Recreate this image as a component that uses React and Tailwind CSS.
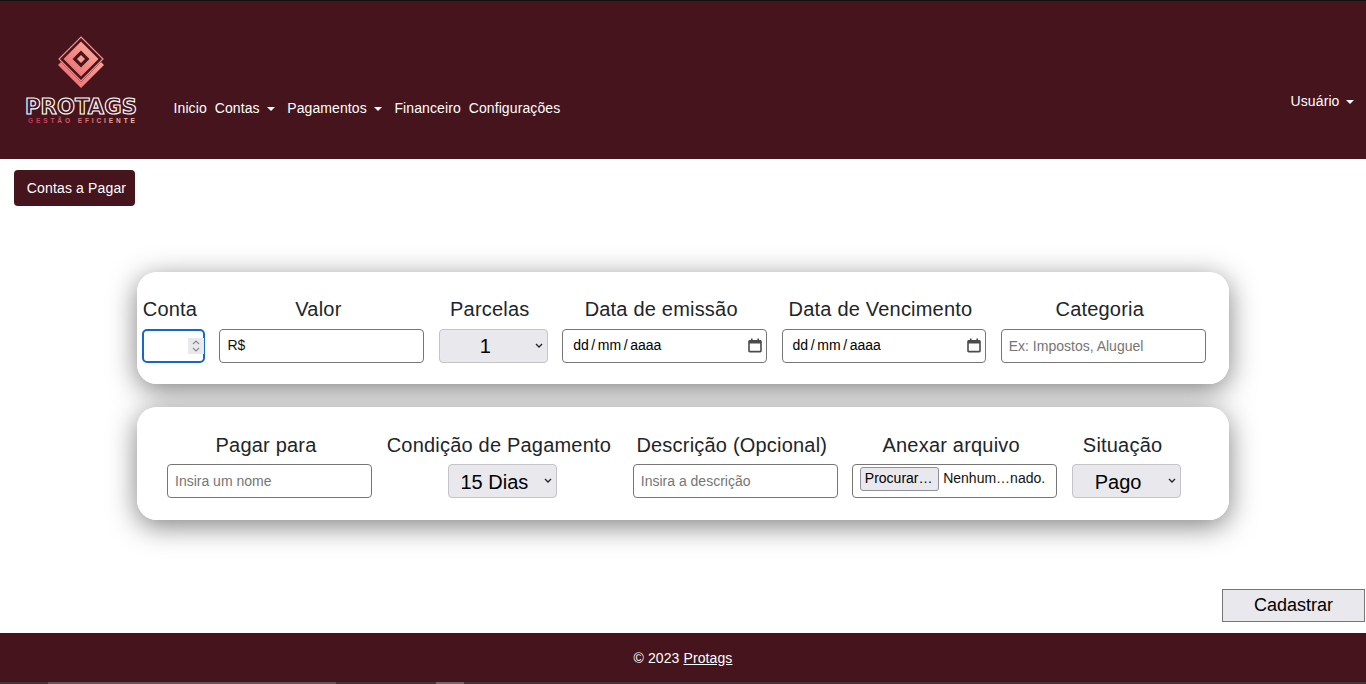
import React from "react";

const Caret = () => (
  <span className="inline-block w-0 h-0 ml-[7.5px] align-[2.4px] border-x-[4.2px] border-x-transparent border-t-[4.2px] border-t-white" />
);

const Logo = () => (
  <svg width="125" height="100" viewBox="20 30 125 100" className="block">
    <defs>
      <linearGradient id="pk" x1="1" y1="0" x2="0" y2="1">
        <stop offset="0" stopColor="#ffb3a0" />
        <stop offset="1" stopColor="#e8656f" />
      </linearGradient>
      <linearGradient id="tg" x1="0" y1="0" x2="1" y2="0">
        <stop offset="0" stopColor="#c4324f" />
        <stop offset="0.55" stopColor="#e4707a" />
        <stop offset="1" stopColor="#f3cdb8" />
      </linearGradient>
    </defs>
    <polygon points="81,88 58,65 81,42 104,65" fill="url(#pk)" />
    <polygon points="81,36 104,59 81,82 58,59" fill="#46141d" />
    <polygon points="81,37 103,59 81,81 59,59" fill="none" stroke="#f58c86" strokeWidth="1.2" />
    <polygon points="81,41.5 98.5,59 81,76.5 63.5,59" fill="url(#pk)" />
    <polygon points="81,50.5 89.5,59 81,67.5 72.5,59" fill="#46141d" />
    <polygon points="81,55 85,59 81,63 77,59" fill="#f79a90" />
    <text
      x="25"
      y="113.5"
      textLength="112"
      lengthAdjust="spacingAndGlyphs"
      fontFamily="'DejaVu Sans', sans-serif"
      fontWeight="700"
      fontSize="21"
      fill="#46141d"
      stroke="#ffffff"
      strokeWidth="1.1"
    >
      PROTAGS
    </text>
    <text
      x="28"
      y="122.5"
      textLength="107"
      fontFamily="'Liberation Sans', sans-serif"
      fontWeight="700"
      fontSize="6.5"
      fill="url(#tg)"
    >
      GESTÃO EFICIENTE
    </text>
  </svg>
);

const CalendarIcon = () => (
  <svg width="14" height="15" viewBox="0 0 14 15" className="block">
    <path
      d="M3 0.5h1.6v1.6h4.8V0.5H11v1.6h1.2c.9 0 1.6.7 1.6 1.6v9.1c0 .9-.7 1.6-1.6 1.6H1.8c-.9 0-1.6-.7-1.6-1.6V3.7c0-.9.7-1.6 1.6-1.6H3z M1.8 5.6v7.2h10.4V5.6z"
      fill="#4b4b4b"
      fillRule="evenodd"
    />
  </svg>
);

const Field = ({ label, width, gap = "mb-[5px]", children }) => (
  <div className="flex flex-col shrink-0" style={{ width }}>
    <label className={"block pr-[7px] text-center text-[20px] tracking-[0.2px] leading-[30px] text-[#212529] " + gap}>{label}</label>
    <div className="flex justify-center">{children}</div>
  </div>
);

const inputCls =
  "block w-full h-[34px] px-[7px] text-[14px] text-[#111] bg-white border border-[#767676] rounded-[4px] placeholder:text-[#757575]";

const Select = ({ low, children }) => (
  <div className="relative w-[109px] h-[34px]">
    <select className={"block w-full h-full pr-[16px] appearance-none text-[20px] text-center text-black bg-[#e9e9ed] border border-[#c4c4c8] rounded-[4px] " + (low ? "pt-[2px]" : "")}>
      <option>{children}</option>
    </select>
    <svg width="8" height="6" viewBox="0 0 8 6" className="absolute right-[5px] top-[14px] pointer-events-none">
      <path d="M1 1l3 3 3-3" fill="none" stroke="#222" strokeWidth="1.3" />
    </svg>
  </div>
);

const DateBox = () => (
  <div className="flex items-center justify-between w-full h-[34px] pl-[10px] pr-[4px] pb-[2px] text-[14px] text-black bg-white border border-[#767676] rounded-[4px]">
    <span className="whitespace-pre">dd<span className="mx-[2.6px]">/</span>mm<span className="mx-[2.6px]">/</span>aaaa</span>
    <CalendarIcon />
  </div>
);

const cardCls =
  "relative flex gap-[14.4px] ml-[137px] w-[1092px] bg-white rounded-[20px] before:content-[''] before:absolute before:inset-0 before:-z-10 before:rounded-[20px] before:shadow-[0_6px_28px_rgba(0,0,0,0.5)]";

export default function App() {
  return (
    <div className="flex flex-col w-[1366px] h-[684px] overflow-hidden bg-white font-['Liberation_Sans',Arial,sans-serif]">
      <header className="flex items-start justify-between h-[159px] shrink-0 bg-[#46141d] border-t border-[#111] text-white text-[14px] tracking-[0.1px]">
        <div className="flex items-start">
          <div className="ml-[20px] mt-[29px]">
            <Logo />
          </div>
          <nav className="flex gap-[7.9px] mt-[97px] ml-[28.5px] leading-[21px]">
            <a>Inicio</a>
            <a className="pr-[4.2px]">Contas<Caret /></a>
            <a className="pr-[4.2px]">Pagamentos<Caret /></a>
            <a>Financeiro</a>
            <a>Configurações</a>
          </nav>
        </div>
        <a className="mt-[90px] mr-[12px] leading-[21px]"><span className="mr-[-1px]">Usuário</span><Caret /></a>
      </header>

      <main className="isolate flex flex-col flex-1 min-h-0">
        <button className="self-start ml-[14px] mt-[11px] w-[121px] h-[36px] pt-px pl-[4px] text-[14px] tracking-[0.15px] text-white bg-[#46141d] rounded-[4px]">
          Contas a Pagar
        </button>

        <section className={cardCls + " mt-[66px] h-[112px] pl-[5px] pt-[22px]"}>
          <Field label="Conta" width={63}>
            <div className="relative w-full h-[34px]">
              <input type="number" className="block w-full h-full px-[2px] text-[14px] bg-white border-2 border-[#1766c9] rounded-[5px] [appearance:textfield]" />
              <div className="absolute right-[1px] top-[9px] flex flex-col items-center justify-center gap-[2px] w-[16px] h-[16px] bg-[#e9e9ed]">
                <svg width="8" height="5" viewBox="0 0 8 5" className="block"><path d="M1 4l3-3 3 3" fill="none" stroke="#85858f" strokeWidth="1.1" /></svg>
                <svg width="8" height="5" viewBox="0 0 8 5" className="block"><path d="M1 1l3 3 3-3" fill="none" stroke="#85858f" strokeWidth="1.1" /></svg>
              </div>
            </div>
          </Field>
          <Field label="Valor" width={205}>
            <input defaultValue="R$" className={inputCls + " pb-[2px]"} />
          </Field>
          <Field label="Parcelas" width={109}>
            <Select>1</Select>
          </Field>
          <Field label="Data de emissão" width={205}>
            <DateBox />
          </Field>
          <Field label="Data de Vencimento" width={204.8}>
            <DateBox />
          </Field>
          <Field label="Categoria" width={205}>
            <input placeholder="Ex: Impostos, Aluguel" className={inputCls} />
          </Field>
        </section>

        <section className={cardCls + " mt-[23px] h-[113px] pl-[30px] pt-[23px]"}>
          <Field label="Pagar para" width={205} gap="mb-[4px]">
            <input placeholder="Insira um nome" className={inputCls} />
          </Field>
          <Field label="Condição de Pagamento" width={232} gap="mb-[4px]">
            <Select low>15 Dias</Select>
          </Field>
          <Field label="Descrição (Opcional)" width={205} gap="mb-[4px]">
            <input placeholder="Insira a descrição" className={inputCls} />
          </Field>
          <Field label="Anexar arquivo" width={205} gap="mb-[4px]">
            <div className="flex items-start w-full h-[34px] pl-[7px] pt-[2px] text-[14px] text-[#111] bg-white border border-[#767676] rounded-[4px]">
              <button className="w-[79px] h-[24px] pb-[2px] pr-[2px] shrink-0 text-[14px] text-black bg-[#e9e9ed] border border-[#8f8f9d] rounded-[3px]">Procurar…</button>
              <span className="ml-[4px] leading-[22px] whitespace-nowrap">Nenhum…nado.</span>
            </div>
          </Field>
          <Field label="Situação" width={109} gap="mb-[4px]">
            <Select low>Pago</Select>
          </Field>
        </section>

        <button className="self-end mr-px mt-[69px] w-[143px] h-[33px] text-[18px] text-black bg-[#e9e9ed] border border-[#767676]">
          Cadastrar
        </button>
      </main>

      <footer className="flex items-center justify-center h-[49px] pt-px shrink-0 bg-[#46141d] text-[14px] tracking-[0.1px] text-white">
        <span>© 2023 <a className="underline">Protags</a></span>
      </footer>
      <div className="flex h-[2px] shrink-0 bg-[#3a3a3a]">
        <div className="ml-[48px] w-[288px] bg-[#5a5a5a]" />
        <div className="ml-[100px] w-[28px] bg-[#6a6a6a]" />
      </div>
    </div>
  );
}
